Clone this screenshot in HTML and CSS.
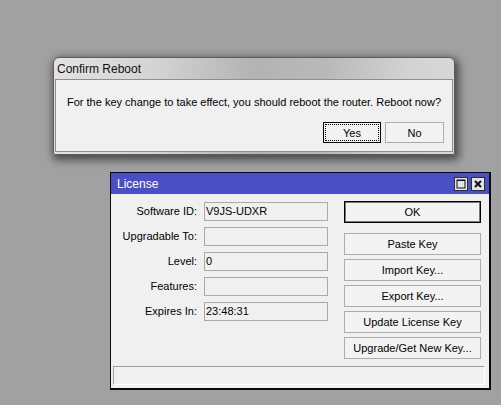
FILE: index.html
```html
<!DOCTYPE html>
<html lang="en">
<head>
<meta charset="utf-8">
<title>License</title>
<link rel="stylesheet" href="styles.css">
</head>
<body>
<main class="desktop">

  <section class="confirm">
    <header class="confirm-title">Confirm Reboot</header>
    <div class="confirm-body">
      <p class="message">For the key change to take effect, you should reboot the router. Reboot now?</p>
      <div class="confirm-actions">
        <button class="btn btn-focus">Yes</button>
        <button class="btn">No</button>
      </div>
    </div>
  </section>

  <section class="license">
    <header class="license-title">
      <span>License</span>
      <div class="title-controls">
        <span class="tbtn">
          <svg width="10" height="10" viewBox="0 0 10 10"><rect x="1" y="1" width="8" height="8" fill="none" stroke="#111" stroke-width="1"/><line x1="1" y1="1.5" x2="9" y2="1.5" stroke="#111" stroke-width="1"/></svg>
        </span>
        <span class="tbtn">
          <svg width="10" height="10" viewBox="0 0 10 10"><path d="M2 2 L8 8 M8 2 L2 8" stroke="#111" stroke-width="2"/></svg>
        </span>
      </div>
    </header>

    <div class="license-main">
      <div class="form">
        <label class="lbl">Software ID:</label><div class="field">V9JS-UDXR</div>
        <label class="lbl">Upgradable To:</label><div class="field"></div>
        <label class="lbl">Level:</label><div class="field">0</div>
        <label class="lbl">Features:</label><div class="field"></div>
        <label class="lbl">Expires In:</label><div class="field">23:48:31</div>
      </div>
      <div class="actions">
        <button class="btn btn-default">OK</button>
        <button class="btn">Paste Key</button>
        <button class="btn">Import Key...</button>
        <button class="btn">Export Key...</button>
        <button class="btn">Update License Key</button>
        <button class="btn">Upgrade/Get New Key...</button>
      </div>
    </div>

    <div class="statusbar"></div>
  </section>

</main>
</body>
</html>
```

FILE: styles.css
```css
html, body {
  margin: 0;
  padding: 0;
}

body {
  width: 501px;
  height: 405px;
  overflow: hidden;
  background: #a1a1a1;
  font-family: "Liberation Sans", Arial, sans-serif;
  font-size: 11px;
  color: #000;
}

.desktop {
  position: relative;
  width: 501px;
  height: 405px;
}

/* ---------- buttons ---------- */
.btn {
  box-sizing: border-box;
  height: 22px;
  padding: 0;
  border: 1px solid #acacac;
  background: #f3f3f3;
  font-family: "Liberation Sans", Arial, sans-serif;
  font-size: 11px;
  color: #000;
  text-align: center;
}

.btn-focus {
  border-color: #000;
  outline: 1px dotted #000;
  outline-offset: -3px;
}

.btn-default {
  border-color: #000;
  box-shadow: inset 0 0 0 1px #777;
}

/* ---------- confirm dialog ---------- */
.confirm {
  position: absolute;
  left: 53px;
  top: 57px;
  width: 402px;
  height: 98px;
  box-sizing: border-box;
  display: flex;
  flex-direction: column;
  padding: 0 1px 2px 1px;
  border: 1px solid #5c5c5c;
  border-radius: 6px 6px 2px 2px;
  background: linear-gradient(to right, #e2e2e2 0%, #d4d4d4 25%, #b3b3b3 50%, #b9b9b9 68%, #d2d2d2 88%, #d8d8d8 100%);
  box-shadow: 2px 3px 9px 2px rgba(0, 0, 0, 0.55);
}

.confirm-title {
  height: 21px;
  line-height: 23px;
  padding-left: 2px;
  font-size: 12px;
  color: #111;
}

.confirm-body {
  flex: 1;
  display: flex;
  flex-direction: column;
  background: #f0f0f0;
  border: 1px solid #8e8e8e;
  padding: 16px 8px 0 11px;
}

.message {
  margin: 0;
  line-height: 13px;
  white-space: nowrap;
}

.confirm-actions {
  display: flex;
  justify-content: flex-end;
  gap: 4px;
  margin-top: 13px;
}

.confirm-actions .btn {
  height: 21px;
  width: 58px;
}

.confirm-actions .btn + .btn {
  width: 59px;
}

/* ---------- license window ---------- */
.license {
  position: absolute;
  left: 110px;
  top: 172px;
  width: 381px;
  height: 218px;
  box-sizing: border-box;
  display: flex;
  flex-direction: column;
  border: 1px solid #0a0a0a;
  border-right-width: 2px;
  border-bottom-width: 2px;
  background: #f0f0f0;
}

.license-title {
  height: 21px;
  flex: none;
  display: flex;
  align-items: center;
  justify-content: space-between;
  padding: 0 4px 0 6px;
  background: #4b4fc6;
  color: #fff;
  font-size: 12px;
}

.title-controls {
  display: flex;
  gap: 3px;
}

.tbtn {
  box-sizing: border-box;
  width: 14px;
  height: 14px;
  display: flex;
  align-items: center;
  justify-content: center;
  background: #e4e4e4;
  border: 1px solid #2e2e2e;
}

.license-main {
  display: flex;
  gap: 16px;
  padding: 7px 8px 0 0;
}

.form {
  display: grid;
  grid-template-columns: 86px 124px;
  grid-auto-rows: 19px;
  column-gap: 7px;
  row-gap: 6px;
  margin-top: 1px;
  align-content: start;
}

.lbl {
  text-align: right;
  line-height: 19px;
  white-space: nowrap;
}

.field {
  box-sizing: border-box;
  border: 1px solid #a9a9a9;
  padding-left: 1px;
  line-height: 17px;
}

.actions {
  width: 137px;
  display: flex;
  flex-direction: column;
  gap: 4px;
}

.actions .btn-default {
  margin-bottom: 6px;
}

.statusbar {
  height: 19px;
  box-sizing: border-box;
  margin: 7px 4px 0 2px;
  border: 1px solid #fff;
  border-top-color: #a0a0a0;
  border-left-color: #a0a0a0;
}
```
